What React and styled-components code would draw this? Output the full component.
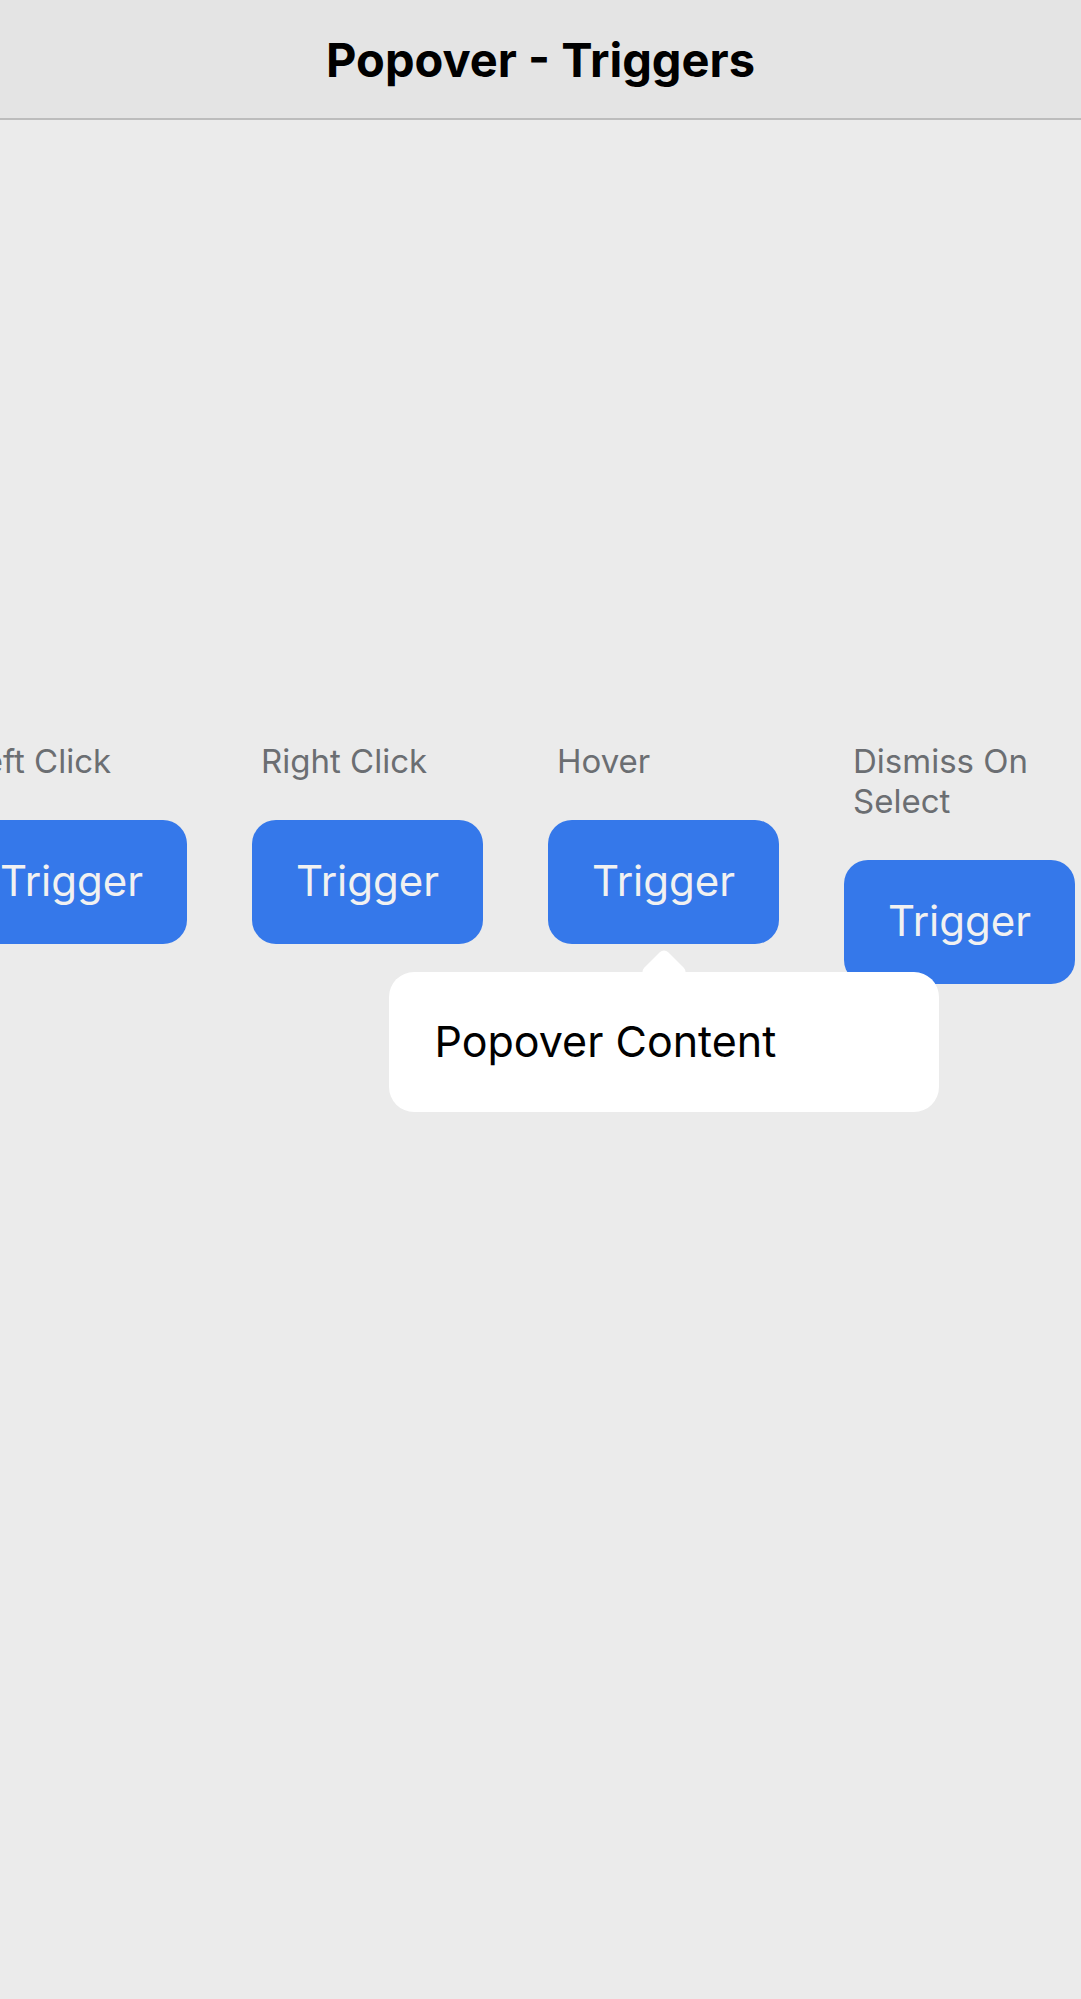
import styled, { createGlobalStyle } from 'styled-components';

const GlobalStyle = createGlobalStyle`
  html, body {
    margin: 0;
    padding: 0;
    background: #ebebeb;
    font-family: Inter, "Noto Sans", sans-serif;
    overflow: hidden;
  }
`;

const Page = styled.div`
  width: 1081px;
  height: 1999px;
  background: #ebebeb;
  overflow: hidden;
`;

const Header = styled.header`
  height: 118px;
  background: #e4e4e4;
  border-bottom: 2px solid #bcbcbc;
  display: flex;
  align-items: center;
  justify-content: center;
`;

const Title = styled.h1`
  margin: 0;
  font-size: 47px;
  font-weight: 700;
  color: #000;
`;

const Content = styled.main`
  padding-top: 621px;
`;

const TriggerRow = styled.div`
  display: flex;
  align-items: flex-start;
  gap: 65px;
  margin-left: -44px;
`;

const Column = styled.div`
  flex: 0 0 231px;
  display: flex;
  flex-direction: column;
`;

const Label = styled.div`
  padding: 0 9px;
  margin-bottom: 39px;
  font-size: 33px;
  line-height: 40px;
  color: #6b6e72;
`;

const ButtonWrap = styled.div`
  position: relative;
`;

const TriggerButton = styled.button`
  width: 231px;
  height: 124px;
  border: none;
  border-radius: 24px;
  background: #3578ea;
  color: #f1f1f1;
  font-family: Inter, "Noto Sans", sans-serif;
  font-size: 42px;
  font-weight: 400;
  padding: 0 0 4px;
  cursor: pointer;
`;

const Popover = styled.div`
  position: absolute;
  top: calc(100% + 28px);
  left: 50%;
  transform: translateX(-50%);
  width: 550px;
  height: 140px;
  box-sizing: border-box;
  padding: 0 46px 3px;
  display: flex;
  align-items: center;
  background: #fff;
  border-radius: 25px;
  z-index: 2;
  font-size: 43px;
  color: #000;

  &::before {
    content: '';
    position: absolute;
    top: -17px;
    left: 50%;
    width: 34px;
    height: 34px;
    margin-left: -17px;
    background: #fff;
    border-radius: 6px;
    transform: rotate(45deg);
    z-index: -1;
  }
`;

const triggers = [
  { label: 'Left Click' },
  { label: 'Right Click' },
  { label: 'Hover', open: true },
  { label: 'Dismiss On Select' },
];

export default function App() {
  return (
    <Page>
      <GlobalStyle />
      <Header>
        <Title>Popover - Triggers</Title>
      </Header>
      <Content>
        <TriggerRow>
          {triggers.map((t) => (
            <Column key={t.label}>
              <Label>{t.label}</Label>
              <ButtonWrap>
                <TriggerButton>Trigger</TriggerButton>
                {t.open && <Popover>Popover Content</Popover>}
              </ButtonWrap>
            </Column>
          ))}
        </TriggerRow>
      </Content>
    </Page>
  );
}
